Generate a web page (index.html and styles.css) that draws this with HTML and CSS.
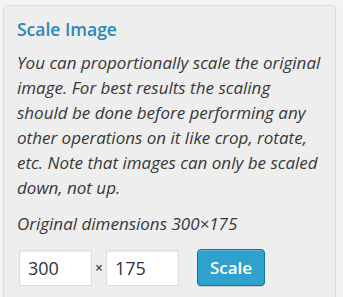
FILE: index.html
```html
<!DOCTYPE html>
<html>
<head>
<meta charset="utf-8">
<link rel="stylesheet" href="styles.css">
</head>
<body>
<div class="page">
  <div class="panel">
    <h3 class="title">Scale Image</h3>
    <p class="desc">You can proportionally scale the original image. For best results the scaling should be done before performing any other operations on it like crop, rotate, etc. Note that images can only be scaled down, not up.</p>
    <p class="dims">Original dimensions 300×175</p>
    <div class="controls">
      <input class="field" type="text" value="300">
      <span class="times">×</span>
      <input class="field" type="text" value="175">
      <button class="btn">Scale</button>
    </div>
  </div>
</div>
</body>
</html>
```
FILE: styles.css
```css
html, body {
  margin: 0;
  padding: 0;
  background: #f3f3f3;
  font-family: "Open Sans", sans-serif;
  color: #383838;
}
.page {
  padding: 5px 7px 0 3px;
  height: 292px;
  overflow: hidden;
}
.panel {
  background: #eeeeee;
  border: 1px solid #dcdcdc;
  border-radius: 4px;
  box-shadow: 0 1px 1px rgba(0,0,0,0.04);
  padding: 10px 10px 40px 13px;
}
.title {
  margin: 0;
  font-size: 17.5px;
  font-weight: 600;
  line-height: 26px;
  color: #2d88b8;
}
.desc {
  margin: 8px 0 0;
  font-size: 17px;
  font-style: italic;
  line-height: 25px;
  color: #383838;
}
.dims {
  margin: 11px 0 0;
  font-size: 17px;
  font-style: italic;
  line-height: 25px;
  color: #383838;
}
.controls {
  display: flex;
  align-items: center;
  margin-top: 13px;
  padding-left: 2px;
}
.field {
  box-sizing: border-box;
  width: 73px;
  height: 36px;
  margin: 0;
  padding: 0 8px;
  border: 1px solid #dddddd;
  background: #fff;
  font-family: "Open Sans", sans-serif;
  font-size: 18px;
  color: #333;
  box-shadow: inset 0 1px 2px rgba(0,0,0,0.07);
  outline: none;
}
.times {
  width: 14px;
  text-align: center;
  font-size: 14px;
  font-weight: 600;
  color: #444;
}
.btn {
  box-sizing: border-box;
  margin-left: 18px;
  width: 68px;
  height: 37px;
  padding: 0;
  border: 1px solid #0f77a4;
  border-radius: 4px;
  background: #2ea2cc;
  color: #fff;
  font-family: "Open Sans", sans-serif;
  font-size: 17px;
  font-weight: 600;
  box-shadow: inset 0 1px 0 rgba(120,200,230,0.5), 0 1px 0 rgba(0,0,0,0.15);
}
```
